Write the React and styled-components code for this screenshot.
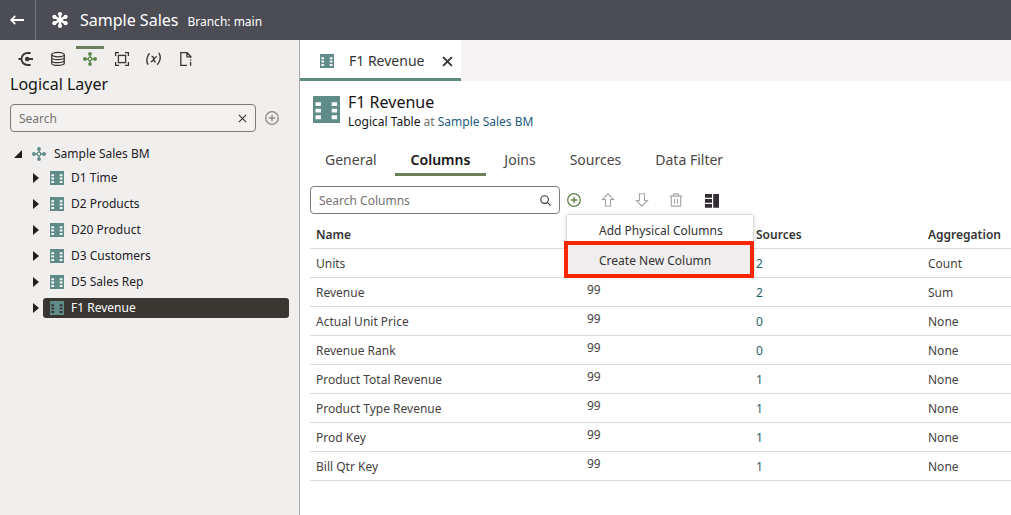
import React from "react";
import styled, { createGlobalStyle } from "styled-components";

const Global = createGlobalStyle`
  *, *::before, *::after { box-sizing: border-box; }
  body { margin: 0; background: #fff; }
  body, button, input { font-family: "Noto Sans", "Open Sans", sans-serif; color: #333; }
  button { border: 0; background: none; padding: 0; cursor: pointer; }
  svg { display: block; flex: none; }
  h1, h2, p, ul { margin: 0; padding: 0; font-weight: 400; }
  ul { list-style: none; }
  a { color: inherit; text-decoration: none; }
`;

const Page = styled.div`
  min-height: 100vh;
  display: flex;
  flex-direction: column;
`;

const TopBar = styled.header`
  height: 40px;
  display: flex;
  align-items: center;
  background: #4b4c54;
  color: #fff;
`;

const BackButton = styled.button`
  width: 36px;
  height: 40px;
  display: flex;
  align-items: center;
  padding-left: 10px;
  border-right: 1px solid #75767c;
  color: #fff;
`;

const Brand = styled.div`
  display: flex;
  align-items: center;
  padding-left: 16px;
`;

const ModelName = styled.h1`
  padding-left: 12px;
  font-size: 16px;
  line-height: 24px;
`;

const Branch = styled.p`
  padding: 3px 0 0 9px;
  font-size: 12px;
  line-height: 20px;
`;

const Body = styled.div`
  flex: 1;
  display: flex;
`;

const Sidebar = styled.aside`
  width: 300px;
  flex: none;
  background: #f1efee;
  border-right: 1px solid #a9a9a9;
`;

const LayerBar = styled.nav`
  display: flex;
  gap: 4px;
  padding: 6px 12px 0;
`;

const LayerButton = styled.button`
  width: 28px;
  height: 28px;
  display: flex;
  align-items: center;
  justify-content: center;
  padding-bottom: 5px;
  border-top: 3px solid ${(p) => (p.$active ? "#6c7f5b" : "transparent")};
  color: ${(p) => (p.$active ? "#5f8a4e" : "#3a3632")};
`;

const PanelTitle = styled.h2`
  padding: 0 10px;
  font-size: 16px;
  line-height: 20px;
  color: #161513;
`;

const SearchRow = styled.div`
  display: flex;
  align-items: center;
  gap: 8px;
  padding: 10px 0 0 10px;
`;

const SearchBox = styled.div`
  width: ${(p) => p.$width};
  height: 28px;
  display: flex;
  align-items: center;
  padding: 0 8px;
  border: 1px solid #7c7a78;
  border-radius: 4px;
  background: ${(p) => p.$fill};
`;

const SearchInput = styled.input`
  flex: 1;
  min-width: 0;
  padding: 2px 0 0;
  border: 0;
  outline: 0;
  background: none;
  font-size: 12px;
  line-height: 20px;
  &::placeholder { color: #75726f; opacity: 1; }
`;

const IconButton = styled.button`
  display: flex;
  align-items: center;
  justify-content: center;
  color: ${(p) => p.$color || "#3a3632"};
`;

const Tree = styled.ul`
  padding: 10px 10px 0 12px;
  font-size: 12px;
  color: #22201e;
`;

const RootRow = styled.div`
  height: 23px;
  display: flex;
  align-items: center;
  gap: 8px;
`;

const BranchRow = styled.li`
  height: 26px;
  display: flex;
  align-items: center;
  gap: 1px;
  padding-left: 18px;
`;

const NodeLabel = styled.a`
  flex: 1;
  height: 20px;
  display: flex;
  align-items: center;
  gap: 7px;
  padding-left: 7px;
  border-radius: 3px;
  line-height: 20px;
  background: ${(p) => (p.$selected ? "#3a3632" : "transparent")};
  color: ${(p) => (p.$selected ? "#fff" : "inherit")};
`;

const Toggle = styled.button`
  width: 12px;
  display: flex;
  justify-content: center;
`;

const Main = styled.main`
  flex: 1;
  min-width: 0;
`;

const DocTabs = styled.div`
  height: 41px;
  display: flex;
  background: #f5f3f3;
`;

const DocTab = styled.div`
  display: flex;
  align-items: center;
  padding: 4px 8px 0 20px;
  background: #fff;
  border-bottom: 3px solid #5f8c7f;
`;

const DocName = styled.a`
  padding: 0 18px 0 15px;
  font-size: 14px;
  line-height: 20px;
`;

const Heading = styled.div`
  display: flex;
  gap: 8px;
  padding: 10px 13px 0;
`;

const HeadingIcon = styled.div`
  padding-top: 5px;
`;

const Title = styled.h1`
  font-size: 16px;
  line-height: 22px;
  color: #161513;
`;

const Subtitle = styled.p`
  font-size: 12px;
  line-height: 18px;
  color: #161513;
`;

const Muted = styled.span`
  color: #77736f;
`;

const Link = styled.a`
  color: #1d5c7c;
`;

const Sections = styled.nav`
  display: flex;
  gap: 2px;
  padding: 13px 9px 0;
`;

const Section = styled.button`
  height: 32px;
  padding: 3px 16px 0;
  border-bottom: 3px solid ${(p) => (p.$active ? "#6c7f5b" : "transparent")};
  font-size: 14px;
  line-height: 20px;
  font-weight: ${(p) => (p.$active ? 600 : 400)};
  color: ${(p) => (p.$active ? "#161513" : "#4a4744")};
`;

const Toolbar = styled.div`
  display: flex;
  align-items: center;
  gap: 18px;
  padding: 10px 0 0 10px;
`;

const MenuAnchor = styled.div`
  position: relative;
  margin-left: -12px;
`;

const Menu = styled.ul`
  position: absolute;
  z-index: 1;
  top: 22px;
  left: 0;
  width: 188px;
  background: #fff;
  border: 1px solid #dcdada;
  border-radius: 3px;
  box-shadow: 0 1px 4px rgba(0, 0, 0, 0.16);
`;

const MenuItem = styled.button`
  width: 100%;
  height: 30px;
  display: block;
  padding: 2px 0 0 32px;
  font-size: 12px;
  line-height: 20px;
  text-align: left;
  background: ${(p) => (p.$hot ? "#efeded" : "#fff")};
`;

const MenuEntry = styled.li`
  position: relative;
  ${(p) => p.$marked && `
    &::after {
      content: "";
      position: absolute;
      inset: -4px -1px -3px -3px;
      border: 4px solid #fa2600;
      pointer-events: none;
    }
  `}
`;

const TableWrap = styled.div`
  padding: 5px 0 0 10px;
`;

const Table = styled.table`
  width: 100%;
  table-layout: fixed;
  border-collapse: collapse;
  font-size: 12px;
  line-height: 20px;
`;

const Head = styled.th`
  width: ${(p) => p.$width};
  height: 29px;
  padding: 3px 6px 0;
  border-bottom: 1px solid #dcdada;
  text-align: left;
  font-weight: 600;
`;

const Cell = styled.td`
  height: 29px;
  padding: 2px 6px 0;
  border-bottom: 1px solid #dcdada;
  vertical-align: ${(p) => (p.$raised ? "top" : "middle")};
  color: #45423f;
`;

const CountLink = styled.a`
  color: #1f5f6b;
`;

const TableIcon = ({ size = 14, hole = "#f4f6f5" }) => (
  <svg width={size} height={size} viewBox="0 0 14 14" aria-hidden="true">
    <rect width="14" height="14" fill="#5f8c88" />
    <path fill={hole} d="M1.3 3.2h2.8v2H1.3zM1.3 6.6h2.8v2H1.3zM1.3 10h2.8v2H1.3zM9.7 3.2h2.8v2H9.7zM9.7 6.6h2.8v2H9.7zM9.7 10h2.8v2H9.7z" />
  </svg>
);

const ModelIcon = ({ color = "currentColor" }) => (
  <svg width="14" height="14" viewBox="0 0 14 14" fill={color} stroke={color} aria-hidden="true">
    <path d="M7 2v3M7 9v3M2 7h3M9 7h3" strokeWidth="1.5" />
    <circle cx="7" cy="7" r="1.8" fill="none" strokeWidth="1.3" />
    <g stroke="none">
      <circle cx="7" cy="1.9" r="1.9" />
      <circle cx="7" cy="12.1" r="1.9" />
      <circle cx="1.9" cy="7" r="1.9" />
      <circle cx="12.1" cy="7" r="1.9" />
    </g>
  </svg>
);

const PlusCircle = () => (
  <svg width="16" height="16" viewBox="0 0 16 16" fill="none" stroke="currentColor" strokeWidth="1.3" aria-hidden="true">
    <circle cx="8" cy="8" r="6.3" />
    <path d="M8 4.8v6.4M4.8 8h6.4" />
  </svg>
);

const CrossIcon = ({ size, weight }) => (
  <svg width={size} height={size} viewBox="0 0 10 10" fill="none" stroke="currentColor" strokeWidth={weight} aria-hidden="true">
    <path d="M1 1l8 8M9 1L1 9" />
  </svg>
);

const ArrowIcon = ({ down }) => (
  <svg width="16" height="16" viewBox="0 0 16 16" fill="none" stroke="currentColor" strokeWidth="1.1" aria-hidden="true">
    <path d={down ? "M5.5 1.7h5v6.8h3L8 14.2 2.5 8.5h3z" : "M5.5 14.3h5V7.5h3L8 1.8 2.5 7.5h3z"} />
  </svg>
);

const stroke = { width: 16, height: 16, viewBox: "0 0 16 16", fill: "none", stroke: "currentColor", "aria-hidden": true };

const layers = [
  { label: "Connections", icon: (
    <svg {...stroke}>
      <path d="M12.6 2H9.5a6 6 0 0 0 0 12h3.1" strokeWidth="1.8" />
      <path d="M0.5 8h3.500M9 8h6" strokeWidth="1.8" />
      <circle cx="9.2" cy="8" r="2.300" fill="currentColor" stroke="none" />
    </svg>
  ) },
  { label: "Physical Layer", icon: (
    <svg {...stroke} strokeWidth="1.2">
      <ellipse cx="8" cy="3.6" rx="6.3" ry="2.2" />
      <path d="M1.7 3.6v8.6c0 1.2 2.8 2.2 6.3 2.2s6.3-1 6.3-2.2V3.600M1.700 6.500c0 1.200 2.800 2.200 6.300 2.200s6.300-1 6.300-2.200M1.700 9.400c0 1.200 2.800 2.200 6.300 2.200s6.300-1 6.300-2.200" />
    </svg>
  ) },
  { label: "Logical Layer", active: true, icon: <ModelIcon /> },
  { label: "Presentation Layer", icon: (
    <svg {...stroke} strokeWidth="1.300">
      <path d="M1.600 5V1.600H5M11 1.600h3.400V5M14.400 11v3.400H11M5 14.400H1.600V11" />
      <rect x="4.400" y="4.400" width="7.200" height="7.200" />
    </svg>
  ) },
  { label: "Variables", icon: (
    <svg {...stroke} strokeWidth="1.400">
      <path d="M3.600 2.300C.400 5.400.200 10.600 2 13.700M12.600 2.300h.400c2.200 3.100 1.400 8.300-1.800 11.400M5.400 5.400c1.600-.4 2 1 2.300 2.700s.6 3 2.100 2.600M10.800 5.400C9 5.500 7 10.800 4.800 10.700" />
    </svg>
  ) },
  { label: "Documents", icon: (
    <svg {...stroke} strokeWidth="1.300">
      <path d="M9 14.300H2.800V1.700h6.400l3.600 3.800v1.600M9 1.800v4h3.800" />
      <path d="M12.600 8.400v1.300M12.600 11v3.700" strokeWidth="1.400" />
    </svg>
  ) },
];

const nodes = ["D1 Time", "D2 Products", "D20 Product", "D3 Customers", "D5 Sales Rep", "F1 Revenue"];
const sections = ["General", "Columns", "Joins", "Sources", "Data Filter"];
const columns = [
  ["Units", 2, "Count"],
  ["Revenue", 2, "Sum"],
  ["Actual Unit Price", 0, "None"],
  ["Revenue Rank", 0, "None"],
  ["Product Total Revenue", 1, "None"],
  ["Product Type Revenue", 1, "None"],
  ["Prod Key", 1, "None"],
  ["Bill Qtr Key", 1, "None"],
];

export default function App() {
  return (
    <Page>
      <Global />
      <TopBar>
        <BackButton aria-label="Back">
          <svg width="14" height="10" viewBox="0 0 14 10" fill="none" stroke="currentColor" strokeWidth="1.8" aria-hidden="true">
            <path d="M14 5H1.5M5.2 1L1.2 5l4 4" />
          </svg>
        </BackButton>
        <Brand>
          <svg width="16" height="16" viewBox="0 0 16 16" fill="#fff" stroke="#fff" aria-hidden="true">
            <path d="M8 2v12M2.8 5l10.4 6M13.2 5L2.8 11" strokeWidth="2.4" />
            <circle cx="8" cy="8" r="2.6" stroke="none" />
            <g stroke="none">
              <circle cx="8" cy="2.1" r="2.1" />
              <circle cx="8" cy="13.9" r="2.1" />
              <circle cx="2.4" cy="4.8" r="2.1" />
              <circle cx="13.6" cy="4.8" r="2.1" />
              <circle cx="2.4" cy="11.2" r="2.1" />
              <circle cx="13.6" cy="11.2" r="2.1" />
            </g>
          </svg>
          <ModelName>Sample Sales</ModelName>
          <Branch>Branch: main</Branch>
        </Brand>
      </TopBar>
      <Body>
        <Sidebar>
          <LayerBar>
            {layers.map((l) => (
              <LayerButton key={l.label} $active={l.active} aria-label={l.label}>{l.icon}</LayerButton>
            ))}
          </LayerBar>
          <PanelTitle>Logical Layer</PanelTitle>
          <SearchRow>
            <SearchBox $width="246px" $fill="#f4f2f1">
              <SearchInput aria-label="Search" placeholder="Search" />
              <IconButton aria-label="Clear search"><CrossIcon size={9} weight={1.3} /></IconButton>
            </SearchBox>
            <IconButton $color="#8b8886" aria-label="Add"><PlusCircle /></IconButton>
          </SearchRow>
          <Tree>
            <li>
              <RootRow>
                <Toggle aria-label="Collapse Sample Sales BM">
                  <svg width="8" height="8" viewBox="0 0 8 8" aria-hidden="true"><path d="M8 0v8H0z" fill="#22201e" /></svg>
                </Toggle>
                <ModelIcon color="#5f8c88" />
                <a href="#model">Sample Sales BM</a>
              </RootRow>
              <ul>
                {nodes.map((n) => {
                  const selected = n === "F1 Revenue";
                  return (
                    <BranchRow key={n}>
                      <Toggle aria-label={"Expand " + n}>
                        <svg width="6" height="10" viewBox="0 0 6 10" aria-hidden="true"><path d="M0 0l6 5-6 5z" fill="#22201e" /></svg>
                      </Toggle>
                      <NodeLabel href="#node" $selected={selected}>
                        <TableIcon hole={selected ? "#3a3632" : undefined} />
                        {n}
                      </NodeLabel>
                    </BranchRow>
                  );
                })}
              </ul>
            </li>
          </Tree>
        </Sidebar>
        <Main>
          <DocTabs>
            <DocTab>
              <TableIcon />
              <DocName href="#document">F1 Revenue</DocName>
              <IconButton aria-label="Close F1 Revenue"><CrossIcon size={11} weight={1.8} /></IconButton>
            </DocTab>
          </DocTabs>
          <Heading>
            <HeadingIcon><TableIcon size={27} hole="#fff" /></HeadingIcon>
            <div>
              <Title>F1 Revenue</Title>
              <Subtitle>Logical Table <Muted>at</Muted> <Link href="#model">Sample Sales BM</Link></Subtitle>
            </div>
          </Heading>
          <Sections>
            {sections.map((s) => <Section key={s} $active={s === "Columns"}>{s}</Section>)}
          </Sections>
          <Toolbar>
            <SearchBox $width="250px" $fill="#fff">
              <SearchInput aria-label="Search Columns" placeholder="Search Columns" />
              <IconButton aria-label="Run search">
                <svg width="11" height="11" viewBox="0 0 11 11" fill="none" stroke="currentColor" strokeWidth="1.1" aria-hidden="true">
                  <circle cx="4.6" cy="4.6" r="3.8" />
                  <path d="M7.3 7.3l3.3 3.3" />
                </svg>
              </IconButton>
            </SearchBox>
            <MenuAnchor>
              <IconButton $color="#5c8543" aria-label="Add column" aria-expanded="true"><PlusCircle /></IconButton>
              <Menu>
                <MenuEntry><MenuItem>Add Physical Columns</MenuItem></MenuEntry>
                <MenuEntry $marked><MenuItem $hot>Create New Column</MenuItem></MenuEntry>
              </Menu>
            </MenuAnchor>
            <IconButton $color="#a8a6a4" aria-label="Move up"><ArrowIcon /></IconButton>
            <IconButton $color="#a8a6a4" aria-label="Move down"><ArrowIcon down /></IconButton>
            <IconButton $color="#a8a6a4" aria-label="Delete">
              <svg {...stroke} strokeWidth="1.2">
                <path d="M1.8 4.2h12.4M5.500 4V1.800h5V4M3.300 4.200v9.900h9.400V4.200M6.500 7v4.500M9.500 7v4.500" />
              </svg>
            </IconButton>
            <IconButton aria-label="Column layout">
              <svg width="20" height="16" viewBox="0 0 20 16" fill="#332e33" aria-hidden="true">
                <path d="M3 2h7v3.700H3zM3 7h7v3.700H3zM3 12h7v3.700H3zM11.200 2H17v13.700h-5.800z" />
              </svg>
            </IconButton>
          </Toolbar>
          <TableWrap>
            <Table>
              <thead>
                <tr>
                  <Head $width="271px">Name</Head>
                  <Head $width="169px" aria-label="Data type" />
                  <Head $width="172px">Sources</Head>
                  <Head>Aggregation</Head>
                </tr>
              </thead>
              <tbody>
                {columns.map(([name, sources, rule]) => (
                  <tr key={name}>
                    <Cell>{name}</Cell>
                    <Cell $raised>99</Cell>
                    <Cell><CountLink href="#sources">{sources}</CountLink></Cell>
                    <Cell>{rule}</Cell>
                  </tr>
                ))}
              </tbody>
            </Table>
          </TableWrap>
        </Main>
      </Body>
    </Page>
  );
}
